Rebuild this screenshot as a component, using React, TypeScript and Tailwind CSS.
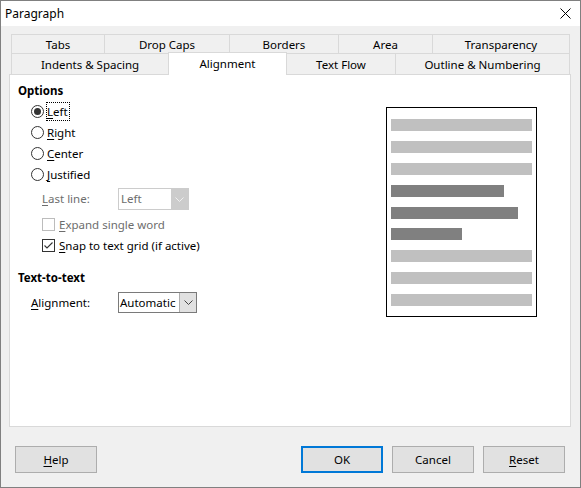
import React from "react";

const U = ({ c }: { c: string }) => (
  <span className="underline decoration-1 underline-offset-[2px]">{c}</span>
);

function Chevron({ color }: { color: string }) {
  return (
    <svg width="9" height="5" viewBox="0 0 9 5">
      <polyline points="0.5,0.5 4.5,4.5 8.5,0.5" fill="none" stroke={color} strokeWidth="1" />
    </svg>
  );
}

function Radio({ checked }: { checked?: boolean }) {
  return (
    <span className="w-[13px] h-[13px] shrink-0 rounded-full border border-[#333333] bg-white flex items-center justify-center">
      {checked && <span className="w-[7px] h-[7px] rounded-full bg-[#333333]" />}
    </span>
  );
}

function RadioRow({ children, checked, focus }: { children: React.ReactNode; checked?: boolean; focus?: boolean }) {
  return (
    <div className="h-[21px] flex items-center ml-[13px]">
      <Radio checked={checked} />
      <span
        className={
          focus
            ? "ml-[2px] border border-dotted border-black leading-[17px] pr-px"
            : "ml-[2px] border border-transparent leading-[17px] pr-px"
        }
      >
        {children}
      </span>
    </div>
  );
}

const bars: { w: string; dark?: boolean }[] = [
  { w: "w-[141px]" },
  { w: "w-[141px]" },
  { w: "w-[141px]" },
  { w: "w-[113px]", dark: true },
  { w: "w-[127px]", dark: true },
  { w: "w-[71px]", dark: true },
  { w: "w-[141px]" },
  { w: "w-[141px]" },
  { w: "w-[141px]" },
];

export default function App() {
  return (
    <div className="w-[581px] h-[488px] border border-[#808080] flex flex-col font-['Noto_Sans',sans-serif] text-[11.5px] text-black bg-[#f0f0f0] overflow-hidden">
      {/* title bar */}
      <div className="h-[25px] bg-white flex items-center justify-between pl-[4px] pr-[9px] shrink-0">
        <span className="leading-[16px] text-[12px]">Paragraph</span>
        <svg width="11" height="11" viewBox="0 0 11 11">
          <line x1="0.5" y1="0.5" x2="10.5" y2="10.5" stroke="#000" strokeWidth="1" />
          <line x1="10.5" y1="0.5" x2="0.5" y2="10.5" stroke="#000" strokeWidth="1" />
        </svg>
      </div>

      {/* body */}
      <div className="flex-1 flex flex-col px-[8px] pt-[8px]">
        {/* tabs */}
        <div className="ml-[2px] w-[559px] flex flex-col">
          <div className="flex h-[19px]">
            <div className="w-[93px] h-full pt-px border-t border-l border-[#d9d9d9] flex items-center justify-center">Tabs</div>
            <div className="w-[125px] h-full pt-px border-t border-l border-[#d9d9d9] flex items-center justify-center">Drop Caps</div>
            <div className="w-[109px] h-full pt-px border-t border-l border-[#d9d9d9] flex items-center justify-center">Borders</div>
            <div className="w-[94px] h-full pt-px border-t border-l border-[#d9d9d9] flex items-center justify-center">Area</div>
            <div className="w-[138px] h-full pt-px border-t border-l border-r border-[#d9d9d9] flex items-center justify-center">Transparency</div>
          </div>
          <div className="flex h-[21px] items-start">
            <div className="w-[157px] h-[21px] pt-px border-t border-l border-[#d9d9d9] flex items-center justify-center">Indents &amp; Spacing</div>
            <div className="relative z-10 -mt-px w-[119px] h-[23px] bg-white border-t border-l border-r border-[#d9d9d9] flex items-center justify-center">Alignment</div>
            <div className="w-[108px] h-[21px] pt-px border-t border-[#d9d9d9] flex items-center justify-center">Text Flow</div>
            <div className="w-[175px] h-[21px] pt-px border-t border-l border-r border-[#d9d9d9] flex items-center justify-center">Outline &amp; Numbering</div>
          </div>
        </div>

        {/* panel */}
        <div className="w-[562px] h-[353px] border border-[#d9d9d9] bg-white flex">
          <div className="flex-1 flex flex-col pl-[8px] pt-[8px]">
            <div className="h-[16px] flex items-center font-bold">Options</div>
            <div className="mt-[2px]">
              <RadioRow checked focus>
                <U c="L" />eft
              </RadioRow>
              <RadioRow>
                <U c="R" />ight
              </RadioRow>
              <RadioRow>
                <U c="C" />enter
              </RadioRow>
              <RadioRow>
                <U c="J" />ustified
              </RadioRow>
            </div>
            <div className="mt-[3px] h-[22px] flex items-center ml-[24px]">
              <span className="w-[76px] text-[#6d6d6d]">
                <U c="L" />ast line:
              </span>
              <div className="w-[71px] h-[22px] border border-[#cccccc] bg-white flex">
                <span className="flex-1 pl-[2px] text-[#6d6d6d] flex items-center">Left</span>
                <span className="w-[17px] bg-[#cccccc] flex items-center justify-center">
                  <Chevron color="#f0f0f0" />
                </span>
              </div>
            </div>
            <div className="mt-[4px] h-[21px] flex items-center ml-[24px]">
              <span className="w-[13px] h-[13px] border border-[#bcbcbc] bg-white" />
              <span className="ml-[4px] text-[#6d6d6d]">
                <U c="E" />xpand single word
              </span>
            </div>
            <div className="h-[21px] flex items-center ml-[24px]">
              <span className="w-[13px] h-[13px] border border-[#333333] bg-white flex items-center justify-center">
                <svg width="11" height="11" viewBox="0 0 11 11">
                  <polyline points="1.5,5.5 4,8 9.5,2.5" fill="none" stroke="#333" strokeWidth="1.1" />
                </svg>
              </span>
              <span className="ml-[4px]">
                <U c="S" />nap to text grid (if active)
              </span>
            </div>
            <div className="mt-[14px] h-[16px] flex items-center font-bold">Text-to-text</div>
            <div className="mt-[6px] h-[21px] flex items-center ml-[13px]">
              <span className="w-[87px]">
                <U c="A" />lignment:
              </span>
              <div className="w-[79px] h-[21px] border border-[#7a7a7a] bg-white flex">
                <span className="flex-1 pl-[1px] flex items-center">Automatic</span>
                <span className="w-[17px] bg-[#e1e1e1] border-l border-[#adadad] flex items-center justify-center">
                  <Chevron color="#444" />
                </span>
              </div>
            </div>
          </div>

          {/* preview */}
          <div className="mt-[32px] mr-[33px] w-[151px] h-[210px] border border-black bg-white flex flex-col justify-between pl-[4px] pt-[11px] pb-[10px]">
            {bars.map((b, i) => (
              <div
                key={i}
                className={b.dark ? `${b.w} h-[12px] bg-[#808080]` : `${b.w} h-[12px] bg-[#c0c0c0]`}
              />
            ))}
          </div>
        </div>

        {/* buttons */}
        <div className="mt-[19px] h-[27px] flex">
          <button className="ml-[6px] w-[82px] h-[27px] border border-[#adadad] bg-[#e1e1e1] flex items-center justify-center">
            <span>
              <U c="H" />elp
            </span>
          </button>
          <div className="flex-1" />
          <button className="w-[82px] h-[27px] border-2 border-[#0078d7] bg-[#e1e1e1] flex items-center justify-center">OK</button>
          <button className="ml-[9px] w-[82px] h-[27px] border border-[#adadad] bg-[#e1e1e1] flex items-center justify-center">Cancel</button>
          <button className="ml-[9px] mr-[7px] w-[82px] h-[27px] border border-[#adadad] bg-[#e1e1e1] flex items-center justify-center">
            <span>
              <U c="R" />eset
            </span>
          </button>
        </div>
      </div>
    </div>
  );
}
